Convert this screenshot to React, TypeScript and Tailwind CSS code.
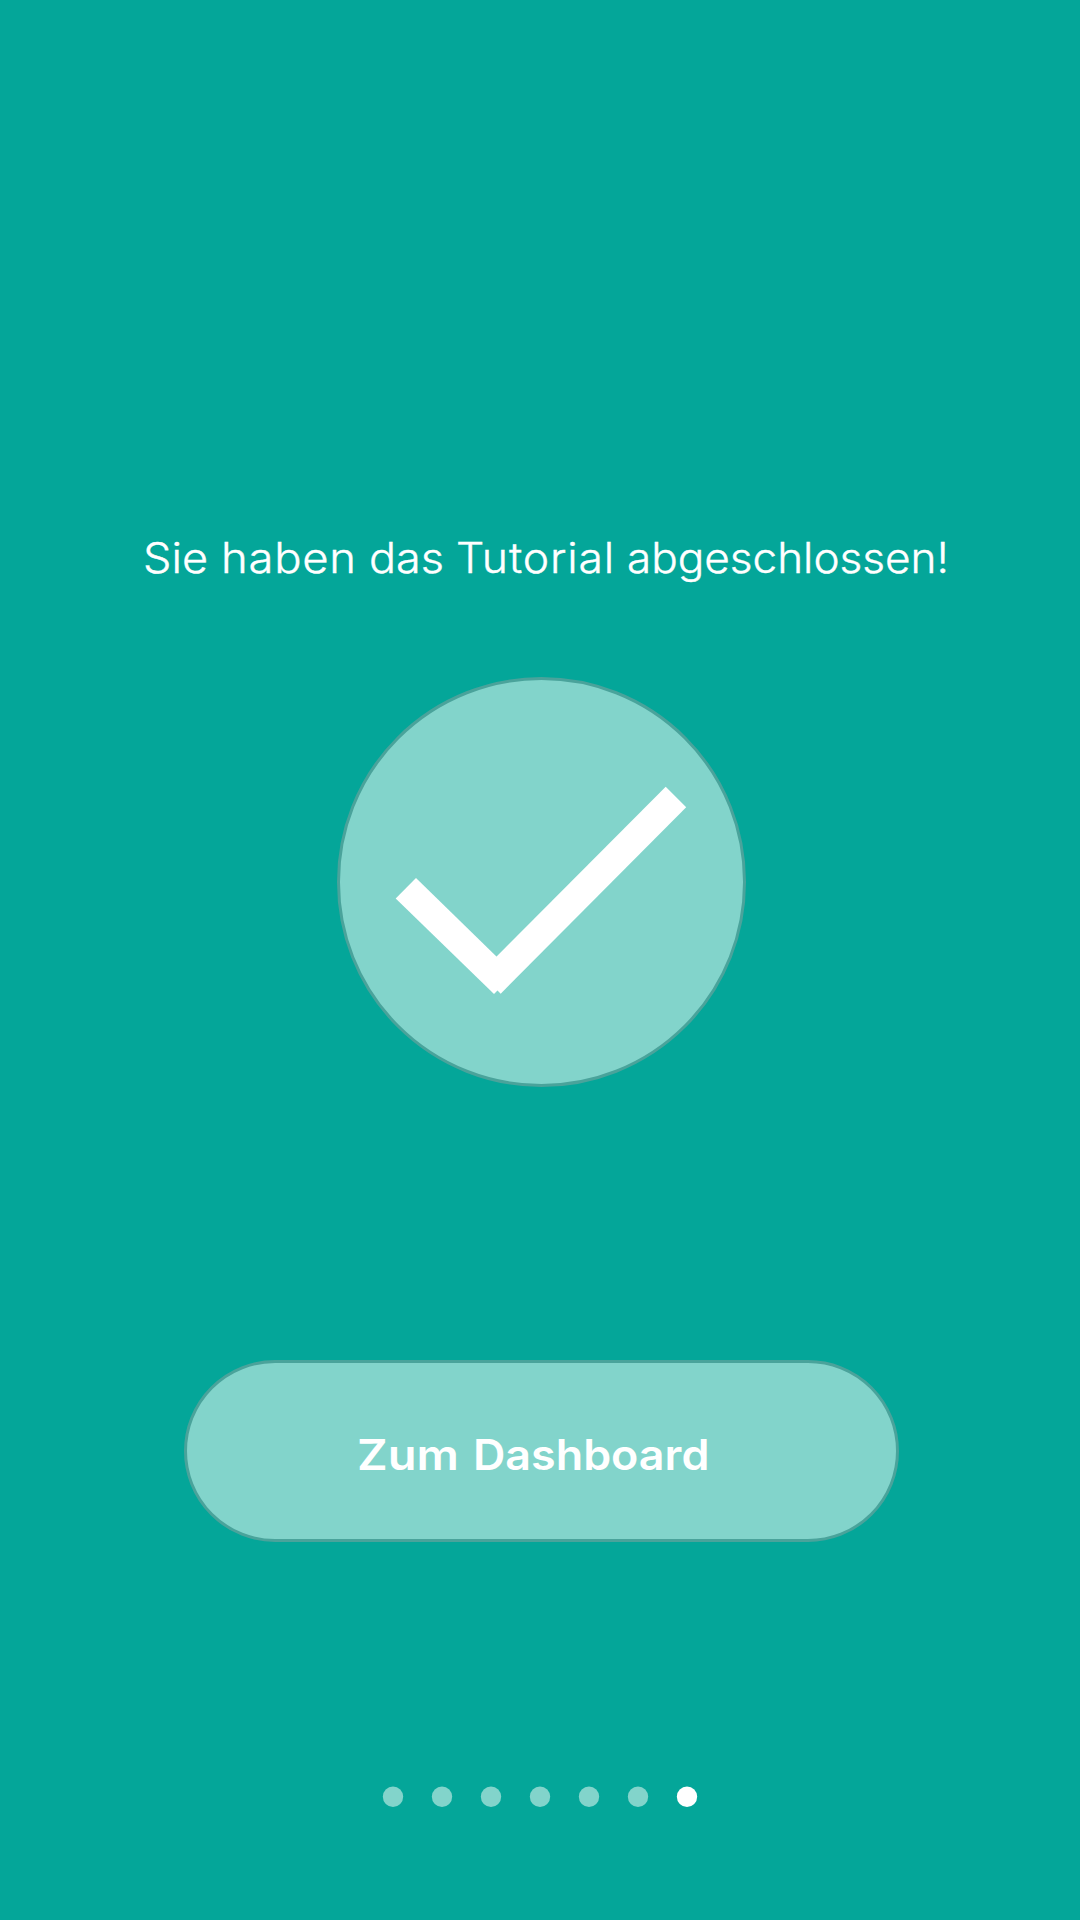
const steps = [0, 1, 2, 3, 4, 5, 6];

export default function App() {
  return (
    <main className="flex h-[1920px] w-[1080px] flex-col overflow-hidden bg-[#04a699] pt-[533px] font-['Inter',sans-serif] text-white">
      <h1 className="flex h-[50px] items-center whitespace-nowrap pl-[143px] text-[42px] font-light leading-[50px] [-webkit-text-stroke:0.4px_white]">
        <span className="w-[78px] origin-left scale-x-[1.07]">Sie</span>
        <span className="w-[148px] origin-left scale-x-[1.08] tracking-[0.7px]">haben</span>
        <span className="w-[87px] origin-left scale-x-[1.07]">das</span>
        <span className="w-[171px] origin-left scale-x-[1.06] tracking-[0.8px]">Tutorial</span>
        <span className="origin-left scale-x-[1.049]">abgeschlossen!</span>
      </h1>
      <div className="ml-[337px] mt-[94px] h-[410px] w-[409px] shrink-0 rounded-full border-[3px] border-[#4aa39b] bg-[#82d4cb]">
        <svg className="-m-[3px] h-[409px] w-[409px]" viewBox="337 677 409 409" fill="white" aria-hidden="true">
          <path d="M416 878 L514 973.7 L494 994 L395.7 898.5 Z" />
          <path d="M665.7 786.7 L686.2 807.3 L500.7 993.7 L480.2 973 Z" />
        </svg>
      </div>
      <button className="ml-[184px] mt-[273px] flex h-[182px] w-[715px] shrink-0 items-center rounded-full border-[3px] border-[#4aa39b] bg-[#82d4cb] pl-[170px] pt-[8px] text-[42px] font-semibold leading-[50px]">
        <span className="w-[116px] origin-left scale-x-[1.12] text-left">Zum</span>
        <span className="origin-left scale-x-[1.067]">Dashboard</span>
      </button>
      <nav className="mt-[244px] pl-[382px]" aria-label="Tutorial">
        <svg className="block h-[22px] w-[320px]" viewBox="0 0 320 22">
          {steps.map((step) => (
            <circle key={step} cx={11 + step * 49} cy={10.7} r={10.2} fill={step === 6 ? "#ffffff" : "#82d4cb"} />
          ))}
        </svg>
      </nav>
    </main>
  );
}
